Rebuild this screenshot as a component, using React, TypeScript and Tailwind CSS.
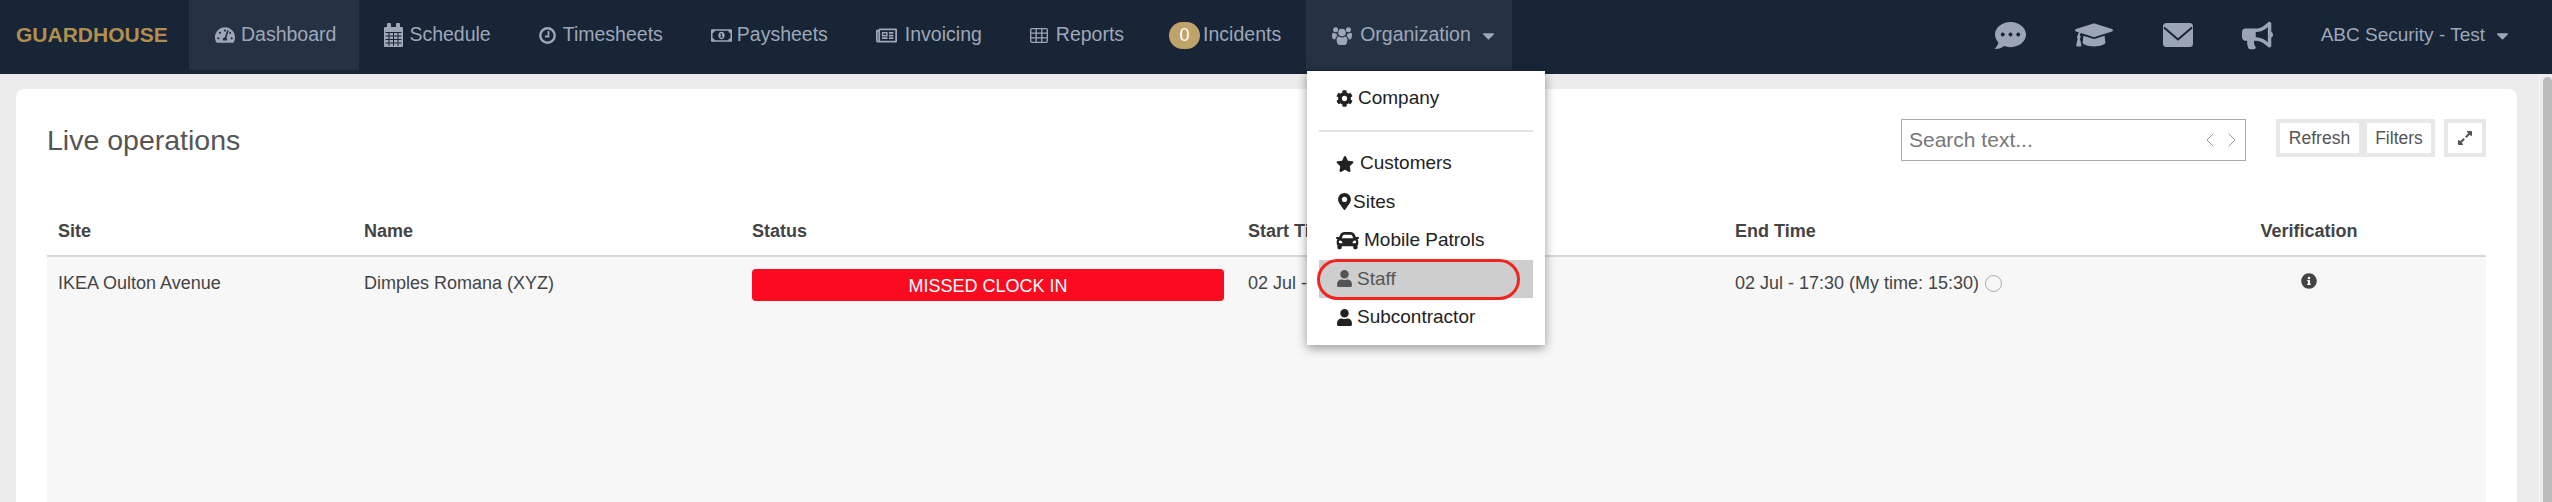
import React from 'react';
import {
  FaTachometerAlt,
  FaRegMoneyBillAlt,
  FaRegNewspaper,
  FaCaretDown,
  FaCommentDots,
  FaGraduationCap,
  FaBullhorn,
  FaExpandAlt,
  FaCog,
  FaStar,
  FaMapMarkerAlt,
  FaCar,
  FaUser,
  FaInfoCircle,
} from 'react-icons/fa';
import { ChevronLeft, ChevronRight } from 'lucide-react';

const CalendarIcon = () => (
  <svg width="19" height="26" viewBox="0 0 19 26" fill="currentColor">
    <path d="M1 5h17a1 1 0 0 1 1 1v18a1 1 0 0 1-1 1H1a1 1 0 0 1-1-1V6a1 1 0 0 1 1-1z" />
    <rect x="3" y="1" width="4" height="7" rx="1" />
    <rect x="12" y="1" width="4" height="7" rx="1" />
    <path
      d="M1.500 10.500h16M1.500 14h16M1.500 17.500h16M1.500 21h16M5 10v14M9.500 10v14M14 10v14"
      stroke="#172536"
      strokeWidth="1"
      fill="none"
    />
  </svg>
);

const ClockIcon = () => (
  <svg width="17" height="17" viewBox="0 0 17 17" fill="none" stroke="currentColor">
    <circle cx="8.500" cy="8.500" r="7.200" strokeWidth="2.400" />
    <path d="M9.500 4v5.500H6" strokeWidth="1.800" />
  </svg>
);

const TableIcon = () => (
  <svg width="18" height="15" viewBox="0 0 18 15" fill="none" stroke="currentColor" strokeWidth="1.300">
    <rect x="0.700" y="0.700" width="16.600" height="13.600" rx="1" />
    <path d="M0.700 5.200h16.600M0.700 9.800h16.600M6.200 0.700v13.600M11.800 0.700v13.600" />
  </svg>
);

const UsersIcon = () => (
  <svg width="20" height="20" viewBox="0 0 20 20" fill="currentColor">
    <circle cx="10" cy="7.500" r="3.800" />
    <circle cx="3.600" cy="4.800" r="2.500" />
    <circle cx="16.400" cy="4.800" r="2.500" />
    <path d="M4.600 14.500c0-2 1-3 2.500-3 .8.700 1.800 1 2.900 1s2.100-.3 2.900-1c1.500 0 2.500 1 2.500 3 0 3.500-1 5.500-3 5.500H7.600c-2 0-3-2-3-5.500z" />
    <path d="M0 9.500c0-1 .5-1.800 1.600-1.800.6.500 1.300.8 2.200.8.300 0 .5 0 .7-.1.100 1 .4 1.800 1 2.500-1.300.6-2 1.700-2.100 3.300H1.200C.4 14.200 0 12 0 9.500z" />
    <path d="M20 9.500c0-1-.5-1.800-1.600-1.800-.6.500-1.300.8-2.200.8-.3 0-.5 0-.7-.1-.1 1-.4 1.800-1 2.500 1.300.6 2 1.700 2.100 3.300h2.200c.8-.5 1.200-2.700 1.200-5.200z" />
  </svg>
);

const EnvelopeIcon = () => (
  <svg width="30" height="24" viewBox="0 0 30 24" fill="none">
    <rect x="0" y="0" width="30" height="24" rx="3.500" fill="currentColor" />
    <path d="M1 4.500l14 12 14-12" stroke="#172536" strokeWidth="2" />
  </svg>
);

const NavItem = ({
  icon,
  label,
  slot,
  active,
  className = 'px-6',
}: {
  icon: React.ReactNode;
  label: string;
  slot: string;
  active?: boolean;
  className?: string;
}) => (
  <div className={`flex h-[70px] items-center ${className} ${active ? 'bg-[#243244]' : ''}`}>
    <span className={`flex items-center ${slot}`}>{icon}</span>
    <span>{label}</span>
  </div>
);

const MenuItem = ({
  icon,
  label,
  slot,
  highlighted,
}: {
  icon: React.ReactNode;
  label: string;
  slot: string;
  highlighted?: boolean;
}) => (
  <div
    className={`flex h-[38.4px] items-center px-[17px] ${
      highlighted ? 'bg-[#cecece] text-[#555]' : 'text-[#222]'
    }`}
  >
    <span className={`flex items-center ${slot}`}>{icon}</span>
    <span>{label}</span>
  </div>
);

const App = () => {
  return (
    <div className="flex h-screen flex-col overflow-hidden bg-[#ececec] font-['Liberation_Sans',Arial,sans-serif]">
      <header className="flex h-[74px] shrink-0 items-start bg-[#172536] text-[19.5px] text-[#9ea7b8]">
        <div className="flex h-[70px] w-[189px] items-center pl-[16px] text-[21px] font-bold text-[#b08f4f]">
          GUARDHOUSE
        </div>
        <NavItem
          active
          className="pr-[23px] pl-[26px]"
          slot="w-[26px]"
          icon={<FaTachometerAlt className="text-[20px]" />}
          label="Dashboard"
        />
        <NavItem className="pr-6 pl-[25px]" slot="w-[25px]" icon={<CalendarIcon />} label="Schedule" />
        <NavItem slot="w-[24px]" icon={<ClockIcon />} label="Timesheets" />
        <NavItem slot="w-[26px]" icon={<FaRegMoneyBillAlt className="text-[21px]" />} label="Paysheets" />
        <NavItem slot="w-[29px]" icon={<FaRegNewspaper className="text-[21px]" />} label="Invoicing" />
        <NavItem slot="w-[26px]" icon={<TableIcon />} label="Reports" />
        <div className="flex h-[70px] items-center gap-[3px] pr-[25px] pl-[21px]">
          <span className="flex h-[27px] w-[31px] items-center justify-center rounded-full bg-[#c0a36a] text-[18px] text-white">
            0
          </span>
          <span>Incidents</span>
        </div>
        <div className="flex h-[70px] items-center bg-[#243244] pr-[14px] pl-[26px]">
          <span className="flex w-[28px] items-center">
            <UsersIcon />
          </span>
          <span>Organization</span>
          <FaCaretDown className="ml-[8px] text-[19px]" />
        </div>
        <div className="ml-auto flex h-[70px] items-center pr-[40px] text-[19px]">
          <FaCommentDots className="text-[31px] text-[#9aa5b8]" />
          <FaGraduationCap className="ml-[49px] text-[38px] text-[#9aa5b8]" />
          <span className="ml-[50px] flex items-center text-[#9aa5b8]">
            <EnvelopeIcon />
          </span>
          <FaBullhorn className="ml-[49px] text-[31px] text-[#9aa5b8]" />
          <span className="ml-[48px]">ABC Security - Test</span>
          <FaCaretDown className="ml-[8px] text-[19px]" />
        </div>
      </header>

      <div className="flex min-h-0 flex-1">
        <main className="min-w-0 flex-1 pt-[15px] pr-[22px] pl-[16px]">
          <div className="h-full rounded-t-lg bg-white px-[31px] pt-[30px] text-[#444]">
            <div className="flex h-[88px] items-start">
              <h1 className="mt-[2px] text-[28.5px] leading-[38px] font-normal text-[#555]">Live operations</h1>
              <div className="ml-auto flex items-start">
                <div className="flex h-[42px] w-[345px] items-center border border-[#aaa] pr-[1px] pl-[7px] text-[21px] text-[#777]">
                  <span>Search text...</span>
                  <ChevronLeft className="ml-auto size-[24px] text-[#999]" strokeWidth={1} />
                  <ChevronRight className="-ml-[2px] size-[24px] text-[#999]" strokeWidth={1} />
                </div>
                <div className="ml-[30px] flex h-[38px] gap-[8px] bg-[#e8e8e8] p-[4px] text-[17.5px] text-[#555]">
                  <span className="flex w-[79px] items-center justify-center bg-white">Refresh</span>
                  <span className="flex w-[64px] items-center justify-center bg-white">Filters</span>
                </div>
                <div className="ml-[9px] flex h-[38px] bg-[#e8e8e8] p-[4px]">
                  <span className="flex w-[34px] items-center justify-center bg-white">
                    <FaExpandAlt className="text-[16px] text-[#555]" />
                  </span>
                </div>
              </div>
            </div>

            <div className="grid h-[50px] grid-cols-[306px_388px_496px_487px_408px_354px] items-center border-b-2 border-[#d8d8d8] pt-[1px] text-[18px] font-bold">
              <div className="pl-[11px]">Site</div>
              <div className="pl-[11px]">Name</div>
              <div className="pl-[11px]">Status</div>
              <div className="pl-[11px]">Start Time</div>
              <div className="pl-[11px]">End Time</div>
              <div className="text-center">Verification</div>
            </div>
            <div className="grid h-full grid-cols-[306px_388px_496px_487px_408px_354px] items-start bg-[#f7f7f7] text-[18px]">
              <div className="pt-[13px] pl-[11px]">IKEA Oulton Avenue</div>
              <div className="pt-[13px] pl-[11px]">Dimples Romana (XYZ)</div>
              <div className="pt-[12px] pl-[11px]">
                <div className="flex h-[32px] w-[472px] items-center justify-center rounded-[4px] bg-[#fb0a20] pt-[2px] text-white">
                  MISSED CLOCK IN
                </div>
              </div>
              <div className="pt-[13px] pl-[11px]">02 Jul -</div>
              <div className="flex items-center gap-[6px] pt-[13px] pl-[11px]">
                <span>02 Jul - 17:30 (My time: 15:30)</span>
                <span className="size-[17px] rounded-full border border-[#aaa]" />
              </div>
              <div className="flex justify-center pt-[16px]">
                <FaInfoCircle className="text-[16px] text-[#444]" />
              </div>
            </div>
          </div>
        </main>
        <div className="w-[13px] shrink-0 border-l border-[#f4f4f4] pt-[3px] pl-[3px]">
          <div className="h-full rounded-t-full bg-[#bcbcbc]" />
        </div>
      </div>

      <div className="absolute top-[71px] left-[1307px] h-[274px] w-[238px] bg-white px-[12px] pt-[8px] text-[19px] shadow-[0_3px_10px_rgba(0,0,0,0.4)]">
        <MenuItem slot="w-[22px]" icon={<FaCog className="text-[17px]" />} label="Company" />
        <div className="mt-[13px] mb-[12px] h-[2px] bg-[#e2e2e2]" />
        <MenuItem slot="w-[24px]" icon={<FaStar className="text-[18px]" />} label="Customers" />
        <MenuItem slot="w-[17px]" icon={<FaMapMarkerAlt className="text-[17px]" />} label="Sites" />
        <MenuItem slot="w-[28px]" icon={<FaCar className="text-[23px]" />} label="Mobile Patrols" />
        <MenuItem highlighted slot="w-[21px]" icon={<FaUser className="text-[17px]" />} label="Staff" />
        <MenuItem slot="w-[21px]" icon={<FaUser className="text-[17px]" />} label="Subcontractor" />
      </div>
      {/* red annotation drawn over the Staff row */}
      <div className="absolute top-[259px] left-[1317px] h-[41px] w-[203px] rounded-full border-[3px] border-[#f2241f]" />
    </div>
  );
};

export default App;
